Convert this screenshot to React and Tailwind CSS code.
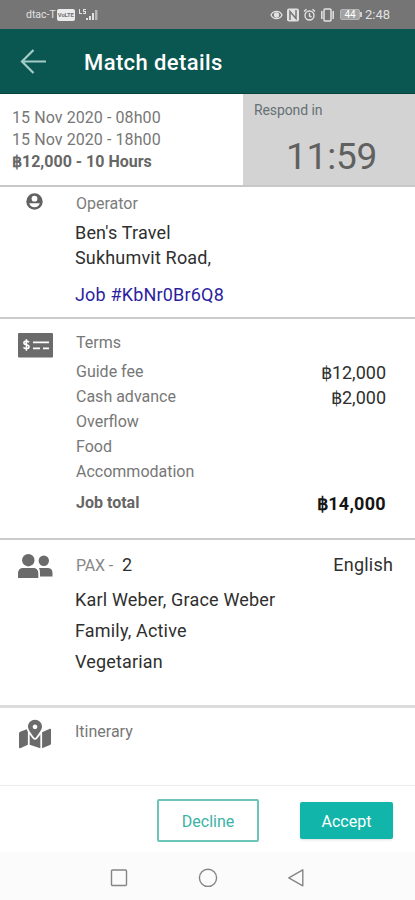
import React from "react";
import { FaMapMarkedAlt } from "react-icons/fa";

const fees = [
  { label: "Guide fee", amount: "฿12,000" },
  { label: "Cash advance", amount: "฿2,000" },
  { label: "Overflow" },
  { label: "Food" },
  { label: "Accommodation" },
];

const StatusBar = () => (
  <div className="flex h-[29px] shrink-0 items-center bg-[#757575] pl-[26px] pr-[24px] text-[#e2e2e2]">
    <span className="text-[10.5px] leading-[12px]">dtac-T</span>
    <span className="ml-[1px] flex h-[12px] w-[18px] items-center justify-center rounded-[2px] bg-[#ececec] text-[6px] font-bold leading-none tracking-[-0.2px] text-[#757575]">
      VoLTE
    </span>
    <svg width="20" height="13" viewBox="0 0 20 13" className="ml-[3px]" fill="currentColor">
      <path d="M1 1h1v4h2v1H1zM5 1h3v1H6v1h2v3H5V5h2V4H5z" />
      <rect x="8" y="10" width="2" height="2" />
      <rect x="11" y="8" width="2" height="4" />
      <rect x="14" y="5" width="2" height="7" />
      <rect x="17" y="2" width="2.500" height="10" opacity="0.6" />
    </svg>

    <div className="ml-auto flex items-center">
      <svg width="13" height="12" viewBox="0 0 13 12" fill="none" stroke="currentColor" strokeWidth="1.3">
        <path d="M1 6C3.2 1.2 9.800 1.200 12 6 9.800 10.800 3.200 10.800 1 6z" />
        <circle cx="6.500" cy="6" r="2" fill="currentColor" />
      </svg>
      <svg width="12" height="14" viewBox="0 0 12 14" className="ml-[4px]">
        <rect y="0.500" width="12" height="13" rx="2" fill="#e2e2e2" />
        <path d="M3 12V3.500l6 7V2" fill="none" stroke="#757575" strokeWidth="1.500" />
      </svg>
      <svg width="13" height="14" viewBox="0 0 13 14" className="ml-[4px]" fill="none" stroke="currentColor" strokeWidth="1.400">
        <circle cx="6.500" cy="7.500" r="4.500" />
        <path d="M6.500 5v3l2 1M1 3.500L3.500 1.300M12 3.500L9.500 1.300" />
      </svg>
      <svg width="15" height="14" viewBox="0 0 15 14" className="ml-[4px]" fill="none" stroke="currentColor" strokeWidth="1.500">
        <rect x="4" y="1" width="7" height="12" rx="1" />
        <path d="M1.800 3v8M13.200 3v8" />
      </svg>
      <span className="ml-[5px] flex h-[11px] w-[20px] items-center justify-center rounded-[2px] border border-[#b5b5b5] bg-[#a2a2a2] text-[10px] leading-none text-white">
        44
      </span>
      <span className="h-[5px] w-[2px] bg-[#d0d0d0]" />
      <span className="ml-[3px] w-[26px] whitespace-nowrap text-[13px] leading-[14px]">
        2:48
      </span>
    </div>
  </div>
);

const OperatorIcon = () => (
  <svg width="17" height="17" viewBox="0 0 17 17" className="ml-[26px] mt-[6px]">
    <circle cx="8.500" cy="8.500" r="8.200" fill="#626262" />
    <circle cx="8.500" cy="5.700" r="2.900" fill="#fff" />
    <path d="M3.200 10.300h10.600C13 13 11 14.200 8.500 14.200S4 13 3.200 10.300z" fill="#fff" />
  </svg>
);

const MoneyCheckIcon = () => (
  <svg width="35" height="25" viewBox="0 0 35 25" className="ml-[18px] mt-[14px]">
    <rect width="35" height="24.500" rx="1" fill="#6b6b6b" />
    <path
      d="M11 9.300C10.400 8.400 9.500 8.100 8.400 8.100 7 8.100 5.900 8.700 5.900 9.900 5.900 12.500 11 11.100 11 13.800 11 15 9.900 15.700 8.400 15.700 7.100 15.700 6.100 15.300 5.500 14.300M8.400 6.300v11.400"
      fill="none"
      stroke="#fff"
      strokeWidth="1.600"
    />
    <path d="M15 9.300h16M15 15.400h7M25 15.400h6" stroke="#fff" strokeWidth="1.800" />
  </svg>
);

const PeopleIcon = () => (
  <svg width="36" height="26" viewBox="0 0 36 26" className="ml-[17px] mt-[13px]" fill="currentColor">
    <circle cx="11.300" cy="7.200" r="6.200" />
    <path d="M1 25v-4.500C1 16.800 3 15 6.500 15H16c3.300 0 5.300 1.800 5.300 5.500V25z" />
    <circle cx="26.800" cy="7.800" r="5.200" />
    <path d="M22 15h8.500c3.300 0 5 1.800 5 5v3.500H23v-3c0-2.200-.2-3.800-1-5.500z" />
  </svg>
);

const Section = ({ icon, className, children }) => (
  <section className={`flex shrink-0 ${className}`}>
    <div className="flex w-[76px] shrink-0 flex-col items-start text-[#6b6b6b]">
      {icon}
    </div>
    <div className="min-w-0 flex-1">{children}</div>
  </section>
);

const App = () => {
  return (
    <div className="flex h-[900px] w-[415px] flex-col overflow-hidden bg-white font-['Roboto',sans-serif] text-[#2f2f2f]">
      <StatusBar />

      <header className="flex h-[65px] shrink-0 items-center border-b border-[#04423d] bg-[#0a5650] pl-[20px]">
        <svg width="27" height="25" viewBox="0 0 27 25" fill="none" stroke="#a5cbc7" strokeWidth="2.200">
          <path d="M26 12.500H1.800M13.500 1L2 12.500 13.500 24" />
        </svg>
        <h1 className="ml-[37px] pt-[2px] text-[22px] font-medium tracking-[0.4px] text-white">
          Match details
        </h1>
      </header>

      {/* Dates and countdown */}
      <div className="flex h-[93px] shrink-0 border-b-2 border-[#c8c8c8]">
        <div className="w-[243px] pl-[12px] pt-[13px] text-[16px] leading-[22px] tracking-[0.08px] text-[#777]">
          <p>15 Nov 2020 - 08h00</p>
          <p>15 Nov 2020 - 18h00</p>
          <p className="font-bold tracking-normal text-[#666]">฿12,000 - 10 Hours</p>
        </div>
        <div className="flex-1 bg-[#d3d3d3] pl-[11px] pt-[7px]">
          <p className="text-[14px] leading-[18px] tracking-[-0.1px] text-[#667074]">Respond in</p>
          <p className="pl-[32px] pt-[16px] text-[37px] leading-[44px] tracking-[-0.2px] text-[#606060]">
            11:59
          </p>
        </div>
      </div>

      <Section className="h-[132px] border-b-2 border-[#cbcbcb]" icon={<OperatorIcon />}>
        <p className="pt-[7px] text-[16px] leading-[20px] text-[#7c7c7c]">Operator</p>
        <div className="-ml-px text-[18px] leading-[25px] tracking-[0.18px]">
          <p className="pt-[6px]">Ben's Travel</p>
          <p>Sukhumvit Road,</p>
          <p className="pt-[12px] text-[#2c1f9e]">Job #KbNr0Br6Q8</p>
        </div>
      </Section>

      <Section className="h-[221px] border-b-2 border-[#cbcbcb]" icon={<MoneyCheckIcon />}>
        <p className="pb-[6px] pt-[14px] text-[16px] leading-[20px] text-[#777]">Terms</p>
        {fees.map((fee) => (
          <div
            key={fee.label}
            className="flex h-[25px] items-center justify-between pr-[29px] text-[16px] text-[#777]"
          >
            <span>{fee.label}</span>
            <span className="pt-[2px] text-[18px] text-[#2f2f2f]">{fee.amount}</span>
          </div>
        ))}
        <div className="mt-[6px] flex h-[25px] items-center justify-between pr-[29px] font-bold">
          <span className="text-[16px] text-[#666]">Job total</span>
          <span className="pt-[2px] text-[18px] tracking-[0.3px] text-[#151515]">฿14,000</span>
        </div>
      </Section>

      <Section className="h-[168px] border-b-[3px] border-[#dcdcdc]" icon={<PeopleIcon />}>
        <div className="mt-[12px] flex h-[24px] items-center pr-[22px]">
          <span className="pt-[4px] text-[16px] tracking-[-0.2px] text-[#888]">PAX -</span>
          <span className="ml-[9px] text-[18px]">2</span>
          <span className="ml-auto text-[18px] tracking-[0.2px]">English</span>
        </div>
        <div className="-ml-px pt-[8px] text-[18px] leading-[31px] tracking-[0.18px]">
          <p>Karl Weber, Grace Weber</p>
          <p>Family, Active</p>
          <p>Vegetarian</p>
        </div>
      </Section>

      <Section
        className="h-[78px] border-b border-[#ececec]"
        icon={<FaMapMarkedAlt size={32} className="ml-[19px] mt-[10px]" />}
      >
        <p className="-ml-px pt-[14px] text-[16px] leading-[20px] text-[#777]">Itinerary</p>
      </Section>

      {/* Actions */}
      <div className="flex h-[66px] shrink-0 items-center pl-[157px] pt-[3px]">
        <button className="h-[43px] w-[102px] rounded-[2px] border-2 border-[#6cc5b9] pt-[2px] text-[16px] text-[#3bb3a4]">
          Decline
        </button>
        <button className="ml-[41px] h-[37px] w-[93px] rounded-[2px] bg-[#12b5a9] pt-[2px] text-[16px] text-white shadow-sm">
          Accept
        </button>
      </div>

      <nav className="flex h-[48px] shrink-0 bg-[#fbfbfb] pl-[110px] pt-[16px]">
        <svg width="196" height="20" viewBox="0 0 196 20" fill="none" stroke="#858585" strokeWidth="1.400">
          <rect x="1.500" y="2" width="15" height="15.500" rx="1" />
          <circle cx="98" cy="9.800" r="8.600" />
          <path d="M178.800 9.800L192.800 1.800v16z" strokeLinejoin="round" />
        </svg>
      </nav>
    </div>
  );
};

export default App;
